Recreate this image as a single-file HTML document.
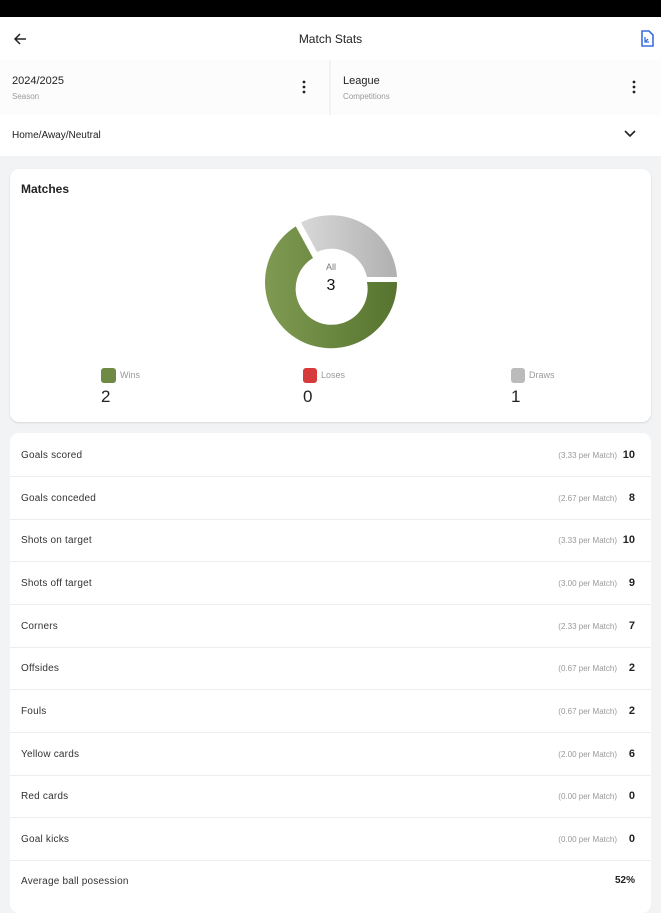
<!DOCTYPE html>
<html><head><meta charset="utf-8"><style>
*{margin:0;padding:0;box-sizing:border-box}
body{width:661px;height:900px;overflow:hidden;background:#f2f3f5;font-family:"Liberation Sans",sans-serif;color:#222;position:relative}
.abs{position:absolute}
.row{position:absolute;left:10px;width:641px;height:42.7px;border-bottom:1px solid #eceef0;font-size:10px}
.row .l{position:absolute;left:11px;top:16px;color:#333;letter-spacing:.2px}
.row .r{position:absolute;right:16px;top:15px;font-size:11px;color:#222;font-weight:bold}
.row .p{position:absolute;right:34px;top:17px;font-size:8px;color:#999}
</style></head><body>
<div class="abs" style="left:0;top:0;width:661px;height:17px;background:#000"></div>
<div class="abs" style="left:0;top:17px;width:661px;height:43px;background:#fff"></div>
<svg class="abs" style="left:12px;top:31px" width="16" height="16" viewBox="0 0 16 16"><path d="M14 8H3M8 3L3 8l5 5" stroke="#222" stroke-width="1.5" fill="none"/></svg>
<div class="abs" style="left:0;width:661px;top:32px;text-align:center;font-size:12px;color:#222">Match Stats</div>
<svg class="abs" style="left:640px;top:30px" width="14" height="17" viewBox="0 0 14 17"><path d="M2 1h7l4 4v11H2z" fill="#fff" stroke="#3b6fe0" stroke-width="1.6"/><path d="M5 7v5h4M5 12l3-3" stroke="#3b6fe0" stroke-width="1.3" fill="none"/></svg>
<div class="abs" style="left:0;top:60px;width:329px;height:55px;background:#fcfcfc"></div>
<div class="abs" style="left:331px;top:60px;width:330px;height:55px;background:#fcfcfc"></div>
<div class="abs" style="left:12px;top:75px;font-size:11px">2024/2025</div>
<div class="abs" style="left:12px;top:92px;font-size:8px;color:#999">Season</div>
<div class="abs" style="left:343px;top:75px;font-size:11px">League</div>
<div class="abs" style="left:343px;top:92px;font-size:8px;color:#999">Competitions</div>
<svg class="abs" style="left:301px;top:80px" width="6" height="14"><circle cx="3" cy="2" r="1.4" fill="#222"/><circle cx="3" cy="7" r="1.4" fill="#222"/><circle cx="3" cy="12" r="1.4" fill="#222"/></svg>
<svg class="abs" style="left:631px;top:80px" width="6" height="14"><circle cx="3" cy="2" r="1.4" fill="#222"/><circle cx="3" cy="7" r="1.4" fill="#222"/><circle cx="3" cy="12" r="1.4" fill="#222"/></svg>
<div class="abs" style="left:0;top:115px;width:661px;height:41px;background:#fff"></div>
<div class="abs" style="left:12px;top:130px;font-size:10px">Home/Away/Neutral</div>
<svg class="abs" style="left:623px;top:129px" width="14" height="10"><path d="M2 2l5 5 5-5" stroke="#222" stroke-width="1.6" fill="none"/></svg>

<div class="abs" style="left:10px;top:169px;width:641px;height:253px;background:#fff;border-radius:9px;box-shadow:0 1px 2px rgba(0,0,0,.12)"></div>
<div class="abs" style="left:21px;top:182px;font-size:12px;font-weight:bold;color:#222">Matches</div>
<svg class="abs" style="left:261px;top:210px" width="140" height="140" viewBox="0 0 140 140">
<defs><linearGradient id="g" x1="0" x2="1"><stop offset="0" stop-color="#7f9a52"/><stop offset="1" stop-color="#56742f"/></linearGradient>
<linearGradient id="h" x1="0" x2="1"><stop offset="0" stop-color="#d8d8d8"/><stop offset="1" stop-color="#b0b0b0"/></linearGradient></defs>
<path d="M136 72A66 66 0 1 1 34.8 16.4L52 48A36 36 0 1 0 106 72Z" fill="url(#g)"/>
<path d="M40 12.5A66 66 0 0 1 136 67H106A36 36 0 0 0 56 42Z" fill="url(#h)"/>
</svg>
<div class="abs" style="left:311px;width:40px;top:262px;text-align:center;font-size:9px;color:#777">All</div>
<div class="abs" style="left:311px;width:40px;top:277px;text-align:center;font-size:16px;color:#111">3</div>
<div class="abs" style="left:101px;top:368px;width:15px;height:15px;border-radius:3px;background:#6e8a44"></div>
<div class="abs" style="left:120px;top:370px;font-size:9px;color:#999">Wins</div>
<div class="abs" style="left:101px;top:387px;font-size:17px">2</div>
<div class="abs" style="left:303px;top:368px;width:14px;height:15px;border-radius:3px;background:#d63a3a"></div>
<div class="abs" style="left:321px;top:370px;font-size:9px;color:#999">Loses</div>
<div class="abs" style="left:303px;top:387px;font-size:17px">0</div>
<div class="abs" style="left:511px;top:368px;width:14px;height:15px;border-radius:3px;background:#bbb"></div>
<div class="abs" style="left:529px;top:370px;font-size:9px;color:#999">Draws</div>
<div class="abs" style="left:511px;top:387px;font-size:17px">1</div>

<div class="abs" style="left:10px;top:433px;width:641px;height:480px;background:#fff;border-radius:9px"></div>
<div class="row" style="top:434px"><span class="l">Goals scored</span><span class="p">(3.33 per Match)</span><span class="r">10</span></div>
<div class="row" style="top:477px"><span class="l">Goals conceded</span><span class="p">(2.67 per Match)</span><span class="r">8</span></div>
<div class="row" style="top:519px"><span class="l">Shots on target</span><span class="p">(3.33 per Match)</span><span class="r">10</span></div>
<div class="row" style="top:562px"><span class="l">Shots off target</span><span class="p">(3.00 per Match)</span><span class="r">9</span></div>
<div class="row" style="top:605px"><span class="l">Corners</span><span class="p">(2.33 per Match)</span><span class="r">7</span></div>
<div class="row" style="top:647px"><span class="l">Offsides</span><span class="p">(0.67 per Match)</span><span class="r">2</span></div>
<div class="row" style="top:690px"><span class="l">Fouls</span><span class="p">(0.67 per Match)</span><span class="r">2</span></div>
<div class="row" style="top:733px"><span class="l">Yellow cards</span><span class="p">(2.00 per Match)</span><span class="r">6</span></div>
<div class="row" style="top:775px"><span class="l">Red cards</span><span class="p">(0.00 per Match)</span><span class="r">0</span></div>
<div class="row" style="top:818px"><span class="l">Goal kicks</span><span class="p">(0.00 per Match)</span><span class="r">0</span></div>
<div class="row" style="top:860px;border:none"><span class="l">Average ball posession</span><span class="r" style="font-size:10px">52%</span></div>
</body></html>
